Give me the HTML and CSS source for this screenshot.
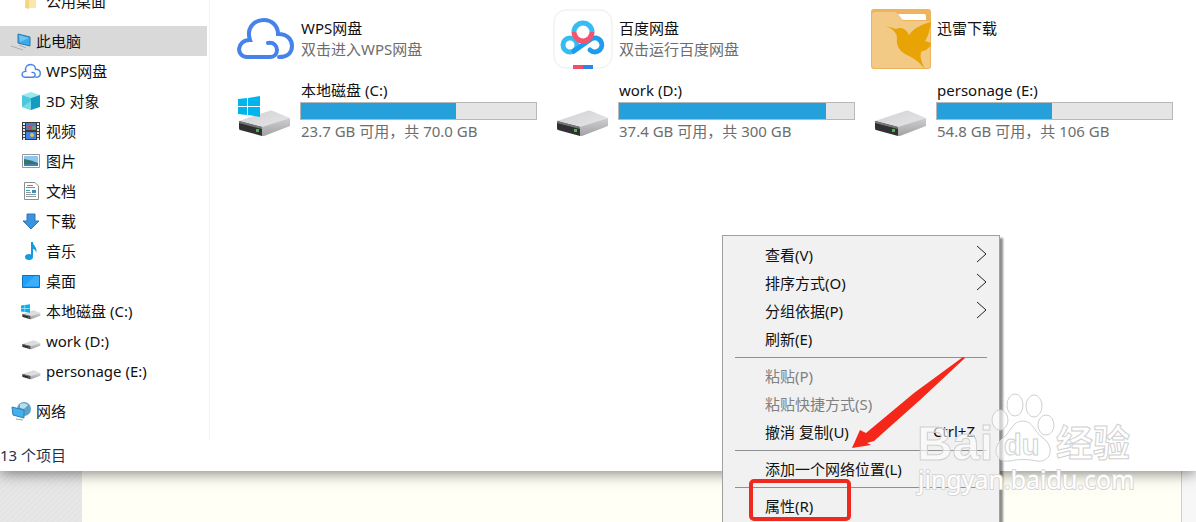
FILE: index.html
```html
<!DOCTYPE html>
<html lang="zh-CN">
<head>
  <meta charset="UTF-8">
  <meta name="viewport" content="width=device-width, initial-scale=1.0">
  <title>此电脑</title>
  <link rel="stylesheet" href="styles.css">
</head>
<body>
  <!-- Shared drive icons -->
  <svg class="defs" width="0" height="0" aria-hidden="true">
    <defs>
      <linearGradient id="driveTop" x1="0" y1="0" x2="1" y2="1">
        <stop offset="0" stop-color="#d2d2d4"/><stop offset="1" stop-color="#e6e6e8"/>
      </linearGradient>
      <linearGradient id="driveSide" x1="0" y1="0" x2="0" y2="1">
        <stop offset="0" stop-color="#cfcfd1"/><stop offset="1" stop-color="#a2a2a5"/>
      </linearGradient>
      <symbol id="drive" viewBox="0 0 54 28">
        <path d="M1 11 L31 1 Q33 0 35 1 L52 8 L24 18 Z" fill="url(#driveTop)"/>
        <path d="M24 17 L52 8 V16 L26 26 L24 26 Z" fill="url(#driveSide)"/>
        <path d="M1 11 L24 17 V26 L2 20 Q1 20 1 18 Z" fill="#303032"/>
        <path d="M1 11 L24 17 V19 L1 13 Z" fill="#77777a"/>
        <rect x="18" y="19" width="3" height="3" fill="#36c04a"/>
      </symbol>
      <symbol id="windows" viewBox="0 0 22 21">
        <path d="M0 3 L9 2 V10 H0 Z M10 2 L22 0 V10 H10 Z M0 11 H9 V19 L0 18 Z M10 11 H22 V21 L10 19 Z" fill="#00b5ee"/>
      </symbol>
      <symbol id="cloud" viewBox="0 0 58 44">
        <path d="M32 26 C38 25 41 29 41 33 C41 37 38 40 34 40 H11 C0 40 0 23 14 23 C10 11 18 3 28 3 C36 3 42 9 42 17 C52 17 56 23 56 29 C56 36 51 40 43 40" fill="none" stroke="#4583ea" stroke-width="4" stroke-linecap="round"/>
      </symbol>
    </defs>
  </svg>

  <div class="window">
    <div class="main">
      <nav class="sidebar">
        <a class="nav-item child" href="#">
          <svg width="20" height="20" viewBox="0 0 20 20"><path d="M5 1 H15 V17 H4 Z" fill="#fbe6ab"/><path d="M5 1 L8 3 V18 L4 17 Z" fill="#f3d583"/></svg>
          公用桌面
        </a>
        <a class="nav-item root active" href="#">
          <svg width="20" height="20" viewBox="0 0 20 20"><path d="M7 3 L19 6 V15 L7 12 Z" fill="#3fa9e8" stroke="#2678ad"/><path d="M8 4 L18 7 L9 11 Z" fill="#6cc3f5"/><path d="M0 15 L12 19 M8 14 L15 17" stroke="#aab0b5" stroke-width="1"/></svg>
          此电脑
        </a>
        <a class="nav-item child" href="#">
          <svg width="20" height="16"><use href="#cloud"/></svg>
          WPS网盘
        </a>
        <a class="nav-item child" href="#">
          <svg width="20" height="20" viewBox="0 0 20 20"><path d="M1 4 L10 1 L19 4 L10 7 Z" fill="#9be7f0"/><path d="M1 4 L10 7 V19 L1 16 Z" fill="#4cc7dc"/><path d="M19 4 L10 7 V19 L19 16 Z" fill="#149bc0"/><path d="M1 16 L10 10 V19 Z" fill="#73dbe7"/></svg>
          3D 对象
        </a>
        <a class="nav-item child" href="#">
          <svg width="20" height="20" viewBox="0 0 20 20"><path d="M1 1 H19 V19 H1 Z" fill="#3a3a3a"/><path d="M5 2 H15 V9 H5 Z" fill="#5078c8"/><path d="M5 11 H15 V18 H5 Z" fill="#3f82df"/><path d="M3 2 V19 M17 2 V19" stroke="#e8e8e8" stroke-width="2" stroke-dasharray="2 1"/><circle cx="9" cy="6" r="2" fill="#cf4b43"/><circle cx="13" cy="7" r="2" fill="#65a845"/><circle cx="11" cy="14" r="2" fill="#e2c34a"/></svg>
          视频
        </a>
        <a class="nav-item child" href="#">
          <svg width="20" height="20" viewBox="0 0 20 20"><path d="M1.5 3.5 H18.5 V16.5 H1.5 Z" fill="#fff" stroke="#989898"/><path d="M3 5 H17 V15 H3 Z" fill="#8cc8ed"/><path d="M3 8 Q10 9 17 12 V13 H3 Z" fill="#39716f"/><path d="M3 13 H17 V15 H3 Z" fill="#3b83b7"/></svg>
          图片
        </a>
        <a class="nav-item child" href="#">
          <svg width="20" height="20" viewBox="0 0 20 20"><path d="M3.5 1.5 H14 L17.5 5 V18.5 H3.5 Z" fill="#fff" stroke="#8c8c8c"/><path d="M5 13.5 H15 M5 15.5 H15 M5 11.5 H10" stroke="#8d989f"/><path d="M6 4.5 H12 M5 6.5 H14 M5 9.5 H9" stroke="#2fa6ca"/><path d="M11 9 H15 V12 H11 Z" fill="#3d8fc0"/></svg>
          文档
        </a>
        <a class="nav-item child" href="#">
          <svg width="20" height="20" viewBox="0 0 20 20"><path d="M6 3 H14 V10 H18 L10 18 L2 10 H6 Z" fill="#3c92dd" stroke="#2a76bd"/></svg>
          下载
        </a>
        <a class="nav-item child" href="#">
          <svg width="20" height="20" viewBox="0 0 20 20"><ellipse cx="8" cy="16" rx="4" ry="3" fill="#149be0"/><path d="M10 16 V1 H12 C12 5 17 6 15 12 C15 9 13 8 12 8 V16 Z" fill="#149be0"/></svg>
          音乐
        </a>
        <a class="nav-item child" href="#">
          <svg width="20" height="20" viewBox="0 0 20 20"><path d="M1.5 4.5 H18.5 V16.5 H1.5 Z" fill="#1f9ffa" stroke="#1271b8"/><path d="M3 15 L14 5 H18 V15 Z" fill="#39aefc"/></svg>
          桌面
        </a>
        <a class="nav-item child" href="#">
          <svg width="20" height="20" viewBox="0 0 20 20"><use href="#drive" x="1" y="9" width="19" height="10"/><use href="#windows" x="0" y="3" width="9" height="9"/></svg>
          本地磁盘 (C:)
        </a>
        <a class="nav-item child" href="#">
          <svg width="20" height="20" viewBox="0 0 20 20"><use href="#drive" x="1" y="9" width="19" height="10"/></svg>
          work (D:)
        </a>
        <a class="nav-item child" href="#">
          <svg width="20" height="20" viewBox="0 0 20 20"><use href="#drive" x="1" y="9" width="19" height="10"/></svg>
          personage (E:)
        </a>
        <a class="nav-item root" href="#">
          <svg width="20" height="20" viewBox="0 0 20 20"><circle cx="13" cy="8" r="7" fill="#5aa2c9"/><path d="M9 3 Q14 1 17 4 L13 8 L9 7 Z" fill="#b6dff0"/><path d="M1 6 L13 9 V17 L2 14 Z" fill="#45b0ef" stroke="#2b7fb4"/><path d="M5 18 L12 19" stroke="#9aa4aa"/></svg>
          网络
        </a>
      </nav>

      <div class="content">
        <div class="tile">
          <svg class="icon" viewBox="0 0 60 60"><use href="#cloud" x="1" y="8" width="58" height="44"/></svg>
          <div class="info">
            <div class="name">WPS网盘</div>
            <div class="desc">双击进入WPS网盘</div>
          </div>
        </div>
        <div class="tile">
          <svg class="icon" viewBox="0 0 60 60">
            <rect x="1" y="1" width="58" height="58" rx="12" fill="#fff" stroke="#ececec"/>
            <circle cx="17" cy="36" r="7" fill="none" stroke="#35bdf2" stroke-width="5"/>
            <path d="M21 42 L38 30 A7 7 0 1 1 37 41" fill="none" stroke="#1d9df0" stroke-width="5" stroke-linecap="round"/>
            <path d="M21 23 A9 9 0 0 1 39 23" fill="none" stroke="#35bdf2" stroke-width="5"/>
            <path d="M21 23 A9 9 0 0 0 39 23" fill="none" stroke="#f4546f" stroke-width="5"/>
            <path d="M20 56 H30 V60 H20 Z" fill="#f04f6c"/>
            <path d="M30 56 H40 V60 H30 Z" fill="#3083e8"/>
          </svg>
          <div class="info">
            <div class="name">百度网盘</div>
            <div class="desc">双击运行百度网盘</div>
          </div>
        </div>
        <div class="tile">
          <svg class="icon" viewBox="0 0 60 60">
            <rect width="60" height="60" rx="3" fill="#edb45c"/>
            <path d="M1 6 Q1 3 4 3 H25 L32 12 H59 V57 Q59 59 56 59 H4 Q1 59 1 56 Z" fill="#f2c985"/>
            <path d="M27 5 H53 Q55 5 55 7 V11 H33 Q31 11 30 9 Z" fill="#fff"/>
            <path d="M15 17 L25 20 C31 17 36 21 38 26 C43 19 51 15 60 13 C59 20 57 28 54 32 L60 34 V36 C57 40 54 42 51 42 C48 46 50 52 54 60 C48 53 43 49 36 46 C28 42 25 36 26 29 C26 24 22 20 15 17 Z" fill="#e8a304"/>
          </svg>
          <div class="info">
            <div class="name">迅雷下载</div>
          </div>
        </div>

        <div class="tile drive">
          <svg class="icon" viewBox="0 0 60 60"><use href="#drive" x="3" y="34" width="54" height="28"/><use href="#windows" x="3" y="20" width="22" height="21"/></svg>
          <div class="info">
            <div class="name">本地磁盘 (C:)</div>
            <div class="bar"><div class="used" style="width: 66%"></div></div>
            <div class="desc">23.7 GB 可用，共 70.0 GB</div>
          </div>
        </div>
        <div class="tile drive">
          <svg class="icon" viewBox="0 0 60 60"><use href="#drive" x="3" y="34" width="54" height="28"/></svg>
          <div class="info">
            <div class="name">work (D:)</div>
            <div class="bar"><div class="used" style="width: 88%"></div></div>
            <div class="desc">37.4 GB 可用，共 300 GB</div>
          </div>
        </div>
        <div class="tile drive">
          <svg class="icon" viewBox="0 0 60 60"><use href="#drive" x="3" y="34" width="54" height="28"/></svg>
          <div class="info">
            <div class="name">personage (E:)</div>
            <div class="bar"><div class="used" style="width: 49%"></div></div>
            <div class="desc">54.8 GB 可用，共 106 GB</div>
          </div>
        </div>
      </div>
    </div>
    <footer class="status"><span>13 个项目</span></footer>
  </div>

  <div class="behind">
    <div class="behind-left"></div>
    <div class="behind-page"></div>
    <div class="behind-right"></div>
  </div>

  <!-- Context menu -->
  <div class="menu">
    <button type="button">查看(V) <svg width="12" height="18" viewBox="0 0 12 18"><path d="M1 1 L10 9 L1 17"/></svg></button>
    <button type="button">排序方式(O) <svg width="12" height="18" viewBox="0 0 12 18"><path d="M1 1 L10 9 L1 17"/></svg></button>
    <button type="button">分组依据(P) <svg width="12" height="18" viewBox="0 0 12 18"><path d="M1 1 L10 9 L1 17"/></svg></button>
    <button type="button">刷新(E)</button>
    <hr>
    <button type="button" disabled>粘贴(P)</button>
    <button type="button" disabled>粘贴快捷方式(S)</button>
    <button type="button">撤消 复制(U) <span class="key">Ctrl+Z</span></button>
    <hr>
    <button type="button">添加一个网络位置(L)</button>
    <hr>
    <button type="button">属性(R)</button>
  </div>

  <!-- Red marks -->
  <svg class="marks" width="220" height="170" viewBox="0 0 220 170">
    <path d="M217 0 L168 36 L120 76 L114 73 L106 91 L125 88 L121 86 L128 84 L174 43 L219 1 Z" fill="#f5271b"/>
    <rect x="5" y="124" width="98" height="38" rx="3" fill="none" stroke="#ee2a20" stroke-width="4"/>
  </svg>

  <!-- Watermark -->
  <svg class="watermark" width="230" height="110" viewBox="0 0 230 110">
    <g class="outline">
      <text class="logo" x="3" y="70">Bai</text>
      <ellipse cx="86" cy="30" rx="8" ry="10"/>
      <ellipse cx="101" cy="15" rx="8" ry="11"/>
      <ellipse cx="120" cy="16" rx="8" ry="11"/>
      <ellipse cx="132" cy="35" rx="8" ry="10"/>
      <path d="M109 31 C119 31 120 42 129 48 C142 58 136 73 123 71 C113 69 105 69 96 71 C82 73 77 59 88 49 C98 41 98 31 109 31 Z"/>
      <text class="du" x="90" y="65">du</text>
      <text class="cn" x="142" y="67">经验</text>
    </g>
    <text class="site" x="4" y="99">jingyan.baidu.com</text>
  </svg>
</body>
</html>
```
FILE: styles.css
```css
* {
  box-sizing: border-box;
}
body {
  position: relative;
  display: flex;
  flex-direction: column;
  margin: 0;
  height: 100vh;
  overflow: hidden;
  background: #fffff5;
  color: #111;
  font-family: "Noto Sans", "Noto Sans CJK SC", sans-serif;
  font-size: 15px;
}
.defs {
  position: absolute;
}

/* Explorer window */
.window {
  position: relative;
  background: #fff;
  box-shadow: 0 2px 14px rgba(0, 0, 0, 0.5);
}
.main {
  display: flex;
}
.sidebar {
  width: 210px;
  margin-top: -14px;
  padding-bottom: 14px;
  border-right: 1px solid #f3f3f3;
}
.nav-item {
  display: flex;
  align-items: center;
  gap: 5px;
  height: 30px;
  margin-right: 2px;
  color: #111;
  line-height: 30px;
  text-decoration: none;
  white-space: nowrap;
}
.child {
  padding-left: 21px;
}
.root {
  margin-top: 10px;
  padding-left: 11px;
}
.active {
  background: #d9d9d9;
}
.content {
  flex: 1;
  display: grid;
  grid-template-columns: repeat(auto-fill, 318px);
  grid-auto-rows: 62px;
  align-content: start;
  row-gap: 5px;
  padding: 9px 0 0 25px;
}
.tile {
  display: flex;
  gap: 5px;
}
.icon {
  flex: none;
  width: 60px;
  height: 60px;
  overflow: visible;
}
.info {
  width: 237px;
  padding-top: 9px;
}
.bar {
  height: 18px;
  border: 1px solid #b8b8b8;
  background: #e5e5e5;
}
.used {
  height: 100%;
  background: #26a0da;
}
.name, .desc {
  padding-left: 1px;
  line-height: 21px;
  white-space: nowrap;
}
.drive .info {
  padding-top: 4px;
}
.drive .name {
  height: 22px;
}
.drive .desc {
  line-height: 23px;
}
.desc {
  color: #6d6d6d;
}
.status {
  height: 31px;
  color: #1e3350;
  line-height: 30px;
}
.status span {
  display: inline-block;
  padding-right: 12px;
}

/* Page behind the window */
.behind {
  flex: 1;
  display: flex;
}
.behind-left {
  width: 82px;
  background: repeating-linear-gradient(135deg, #e4e4e4 0 2px, #e7e7e7 2px 4px);
}
.behind-page {
  flex: 1;
  background: #fffff5;
}
.behind-right {
  width: 15px;
  border-left: 1px solid #cfcfcf;
  background: #f7f7f7;
}

/* Context menu */
.menu {
  position: absolute;
  top: 235px;
  left: 722px;
  width: 278px;
  padding: 6px 2px;
  border: 1px solid #a0a0a0;
  background: #f1f1f1;
  box-shadow: 3px 3px 2px rgba(0, 0, 0, 0.45);
}
.menu button {
  display: flex;
  align-items: center;
  justify-content: space-between;
  width: 100%;
  height: 28px;
  padding: 0 9px 4px 40px;
  border: none;
  background: none;
  color: #111;
  font: inherit;
}
.menu button:disabled {
  color: #808080;
}
.menu svg {
  fill: none;
  stroke: #222;
}
.menu hr {
  height: 1px;
  margin: 3px 10px 5px;
  border: none;
  background: #909090;
}
.key {
  padding-right: 13px;
}

.marks {
  position: absolute;
  top: 357px;
  left: 746px;
}

/* Watermark */
.watermark {
  position: absolute;
  top: 390px;
  left: 914px;
  font-weight: bold;
}
.outline {
  fill: rgba(255, 255, 255, 0.6);
  stroke: #d0d0d0;
  stroke-width: 1px;
}
.logo {
  font-family: "Liberation Sans", sans-serif;
  font-size: 49px;
}
.du {
  font-family: "Liberation Sans", sans-serif;
  font-size: 29px;
}
.cn {
  font-family: "Noto Sans CJK SC", sans-serif;
  font-size: 37px;
}
.site {
  fill: #fff;
  stroke: #d6d6d6;
  stroke-width: 2px;
  paint-order: stroke;
  font-size: 25px;
  font-weight: normal;
}
```
